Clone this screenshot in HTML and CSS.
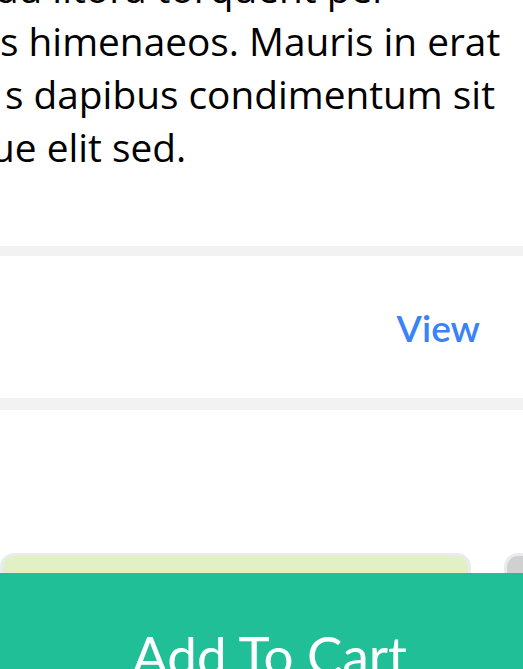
FILE: index.html
```html
<!DOCTYPE html>
<html lang="en">
<head>
<meta charset="utf-8">
<title>Product</title>
<link rel="stylesheet" href="styles.css">
</head>
<body>
<main class="page">
  <section class="desc">
    <div class="line l1">ad litora torquent per</div>
    <div class="line l2">s himenaeos. Mauris in erat</div>
    <div class="line l3">s dapibus condimentum sit</div>
    <div class="line l4">ue elit sed.</div>
  </section>
  <div class="divider"></div>
  <section class="row">
    <a class="view" href="#">View</a>
  </section>
  <div class="divider thick"></div>
  <section class="cards">
    <div class="card green"></div>
    <div class="card grey"></div>
  </section>
</main>
<button class="cart" type="button">Add To Cart</button>
</body>
</html>
```
FILE: styles.css
```css
html, body {
  margin: 0;
  padding: 0;
  background: #ffffff;
  overflow: hidden;
  height: 669px;
}
.page {
  margin-top: -38px;
  width: 523px;
}
.desc {
  font-family: "Open Sans", "Noto Sans", sans-serif;
  font-size: 38.8px;
  line-height: 53px;
  color: #000;
  margin-bottom: 72px;
}
.line { white-space: nowrap; }
.l1 { text-indent: -3px; }
.l2 { text-indent: 0; }
.l3 { text-indent: 5px; }
.l4 { text-indent: -9px; }
.divider {
  height: 10px;
  background: #f2f2f2;
}
.divider.thick { height: 12px; }
.row {
  height: 142px;
  display: flex;
  align-items: center;
  justify-content: flex-end;
  padding-right: 43px;
}
.view {
  font-family: "Lato", "Inter", sans-serif;
  font-weight: 600;
  font-size: 37px;
  color: #3a82f7;
  text-decoration: none;
}
.cards {
  padding-top: 143px;
  display: flex;
  gap: 33px;
}
.card {
  flex: 0 0 471px;
  box-sizing: border-box;
  height: 200px;
  border: 3px solid #e8ebf0;
  border-radius: 14px;
}
.card.green { background: #e2f0c6; }
.card.grey { background: #d0d0d0; }
.cart {
  position: fixed;
  left: 0;
  right: 0;
  bottom: 0;
  height: 96px;
  border: 0;
  margin: 0;
  background: #21bf98;
  color: #fff;
  font-family: "Lato", "Inter", sans-serif;
  font-size: 53px;
  display: flex;
  justify-content: center;
  align-items: flex-start;
  padding: 50px 0 0 16px;
}
```
